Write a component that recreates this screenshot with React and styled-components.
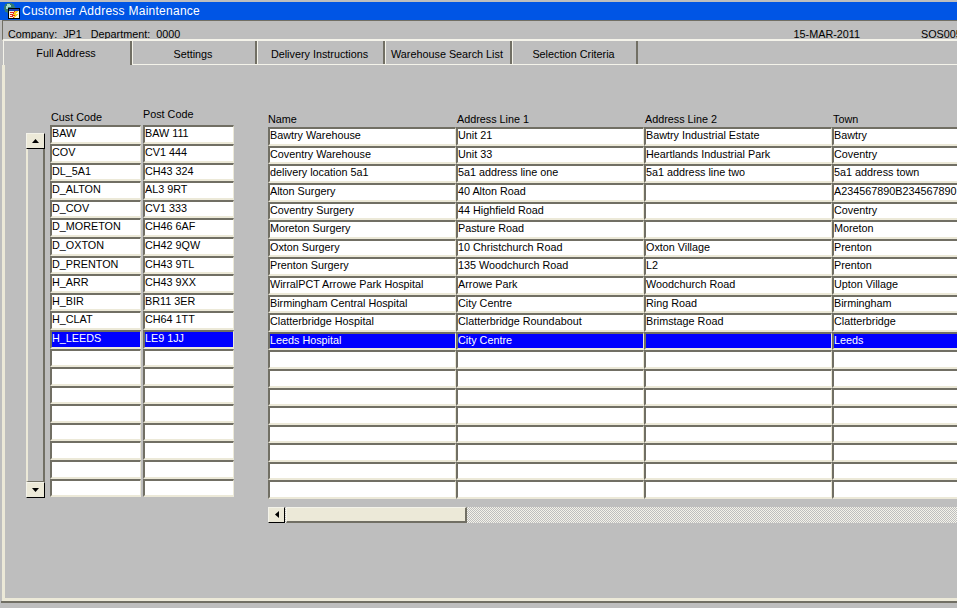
import styled, { createGlobalStyle } from "styled-components";

const GlobalStyle = createGlobalStyle`
  html, body {
    margin: 0;
    padding: 0;
    width: 957px;
    height: 608px;
    overflow: hidden;
    background: #bebebe;
    font-family: "Liberation Sans", Arial, sans-serif;
    font-size: 10.8px;
    color: #000;
  }
`;

const Screen = styled.div`
  width: 957px;
  height: 608px;
  padding-top: 2px;
  box-sizing: border-box;
  overflow: hidden;
  background: #bebebe;
  display: flex;
  flex-direction: column;
`;
const TitleBar = styled.div`
  height: 18px;
  flex: none;
  background: #0055e5;
  color: #fff;
  display: flex;
  align-items: center;
  gap: 2px;
  padding-left: 4px;
  font-size: 12px;
  letter-spacing: 0.26px;
  white-space: nowrap;
`;
const InfoBar = styled.div`
  height: 21px;
  flex: none;
  box-sizing: border-box;
  margin-left: 2px;
  border-top: 1px solid #716f64;
  border-left: 1px solid #716f64;
  border-bottom: 2px solid #f4f3ea;
  display: flex;
  align-items: flex-end;
  padding: 0 0 0 5px;
  white-space: nowrap;
  overflow: hidden;
  & > span {
    line-height: 10px;
  }
`;
const InfoDept = styled.span`
  margin-left: 9px;
`;
const InfoDate = styled.span`
  margin-left: auto;
`;
const InfoCode = styled.span`
  width: 36px;
  margin-left: 61px;
  overflow: hidden;
`;
const TabStrip = styled.div`
  height: 23px;
  flex: none;
  margin-left: 3px;
  display: flex;
  border-bottom: 1px solid #f4f3ea;
`;
const Tab = styled.div`
  width: ${(p) => p.$w}px;
  box-sizing: border-box;
  border-left: 1px solid #f4f3ea;
  border-right: 2px solid #716f64;
  display: flex;
  align-items: center;
  justify-content: center;
  padding: ${(p) => (p.$active ? 0 : 2)}px 2px 0 0;
  ${(p) => p.$active && "margin-bottom: -1px; background: #bebebe; position: relative;"}
  white-space: nowrap;
`;
const Panel = styled.div`
  height: 536px;
  flex: none;
  box-sizing: border-box;
  margin-left: 2px;
  border-left: 3px solid #ece9d8;
  border-bottom: 3px solid #ece9d8;
  padding: 44.4px 0 0 21px;
  display: flex;
  align-items: flex-start;
  overflow: hidden;
`;
const BottomLine = styled.div`
  height: 2px;
  flex: none;
  margin-left: 1px;
  background: #716f64;
`;
const VScroll = styled.div`
  width: 19px;
  height: 365px;
  flex: none;
  margin-top: 23.6px;
  margin-right: 5px;
  display: flex;
  flex-direction: column;
`;
const ScrollButton = styled.div`
  flex: none;
  box-sizing: border-box;
  background: #ece9d8;
  border: 1px solid;
  border-color: #f4f3ea #000 #000 #f4f3ea;
  display: flex;
  align-items: center;
  justify-content: center;
  width: ${(p) => p.$w}px;
  height: ${(p) => p.$h}px;
`;
const VTrack = styled.div`
  flex: 1;
  box-sizing: border-box;
  border-left: 2px solid #ece9d8;
  border-right: 2px solid #716f64;
  border-bottom: 1px solid #716f64;
`;
const Column = styled.div`
  width: ${(p) => p.$w}px;
  flex: none;
  margin-right: ${(p) => p.$gap || 0}px;
`;
const Label = styled.div`
  height: 16px;
  line-height: ${(p) => p.$lh || 16}px;
  white-space: nowrap;
  padding-left: ${(p) => (p.$flush ? 0 : 1)}px;
`;
const Stack = styled.div`
  display: grid;
  grid-auto-rows: 18.6px;
`;
const Field = styled.div`
  box-sizing: border-box;
  background: ${(p) => (p.$selected ? "#0000ff" : "#fff")};
  color: ${(p) => (p.$selected ? "#fff" : "#000")};
  border-style: solid;
  border-width: 2px 1px 2px 2px;
  border-color: #716f64 #ece9d8 #ece9d8 #716f64;
  line-height: 13px;
  padding-left: 0;
  white-space: nowrap;
  overflow: hidden;
`;
const RightSide = styled.div`
  flex: none;
  margin-top: 1.8px;
`;
const Columns = styled.div`
  display: flex;
`;
const HScroll = styled.div`
  margin-top: 7.8px;
  height: 16px;
  width: 689px;
  display: flex;
  background: repeating-conic-gradient(#bebebe 0 25%, #f4f3ea 0 50%) 0 0 / 2px 2px;
`;
const HThumb = styled.div`
  width: 181px;
  flex: none;
  margin-left: 1px;
  box-sizing: border-box;
  background: #ece9d8;
  border-top: 1px solid #f4f3ea;
  border-left: 1px solid #f4f3ea;
  border-right: 2px solid #716f64;
  border-bottom: 2px solid #716f64;
`;

const rows = [
  ["BAW", "BAW 111", "Bawtry Warehouse", "Unit 21", "Bawtry Industrial Estate", "Bawtry"],
  ["COV", "CV1 444", "Coventry Warehouse", "Unit 33", "Heartlands Industrial Park", "Coventry"],
  ["DL_5A1", "CH43 324", "delivery location 5a1", "5a1 address line one", "5a1 address line two", "5a1 address town"],
  ["D_ALTON", "AL3 9RT", "Alton Surgery", "40 Alton Road", "", "A234567890B234567890"],
  ["D_COV", "CV1 333", "Coventry Surgery", "44 Highfield Road", "", "Coventry"],
  ["D_MORETON", "CH46 6AF", "Moreton Surgery", "Pasture Road", "", "Moreton"],
  ["D_OXTON", "CH42 9QW", "Oxton Surgery", "10 Christchurch Road", "Oxton Village", "Prenton"],
  ["D_PRENTON", "CH43 9TL", "Prenton Surgery", "135 Woodchurch Road", "L2", "Prenton"],
  ["H_ARR", "CH43 9XX", "WirralPCT Arrowe Park Hospital", "Arrowe Park", "Woodchurch Road", "Upton Village"],
  ["H_BIR", "BR11 3ER", "Birmingham Central Hospital", "City Centre", "Ring Road", "Birmingham"],
  ["H_CLAT", "CH64 1TT", "Clatterbridge Hospital", "Clatterbridge Roundabout", "Brimstage Road", "Clatterbridge"],
  ["H_LEEDS", "LE9 1JJ", "Leeds Hospital", "City Centre", "", "Leeds"],
];
const SELECTED = 11;
const ROW_COUNT = 20;

const tabs = [
  ["Full Address", 129, true],
  ["Settings", 125],
  ["Delivery Instructions", 128],
  ["Warehouse Search List", 127],
  ["Selection Criteria", 126],
];

const rightColumns = [
  ["Name", 2, true],
  ["Address Line 1", 3],
  ["Address Line 2", 4],
  ["Town", 5],
];

function Cells({ index }) {
  return (
    <Stack>
      {Array.from({ length: ROW_COUNT }, (_, i) => (
        <Field key={i} $selected={i === SELECTED}>
          {rows[i] ? rows[i][index] : ""}
        </Field>
      ))}
    </Stack>
  );
}

const AppIcon = () => (
  <svg width="16" height="18" viewBox="0 0 16 18" shapeRendering="crispEdges">
    <path d="M3 1h5v1h2v2h1v3H9v4H3v-1H1V8H0V4h1V2h2z" fill="#2f7a78" />
    <path d="M3 2h3v1h1v2H4v2H2V4h1z" fill="#a8d8c8" />
    <path d="M4 6h12v11H4z" fill="#000" />
    <path d="M5 7h10v9H5z" fill="#fbf7e4" />
    <path d="M5 7h10v2H5z" fill="#1f3fb0" />
    <path d="M6 10h3v1H6zM6 12h3v1H6zM6 14h3v1H6z" fill="#e0281e" />
    <path d="M11 9h3l-2 3h2l-4 4 1-3H9z" fill="#ffd21f" />
    <path d="M10 9h1l-2 4h2l-1 3H9l1-2H8z" fill="#e0281e" />
  </svg>
);

const App = () => {
  return (
    <>
      <GlobalStyle />
      <Screen>
        <TitleBar>
          <AppIcon />
          Customer Address Maintenance
        </TitleBar>
        <InfoBar>
          <span>Company:&nbsp; JP1</span>
          <InfoDept>Department:&nbsp; 0000</InfoDept>
          <InfoDate>15-MAR-2011</InfoDate>
          <InfoCode>SOS005</InfoCode>
        </InfoBar>
        <TabStrip>
          {tabs.map(([label, w, active]) => (
            <Tab key={label} $w={w} $active={active}>
              {label}
            </Tab>
          ))}
        </TabStrip>
        <Panel>
          <VScroll>
            <ScrollButton $w={19} $h={16}>
              <svg width="7" height="4" viewBox="0 0 7 4">
                <path d="M3.5 0L7 4H0z" fill="#000" />
              </svg>
            </ScrollButton>
            <VTrack />
            <ScrollButton $w={19} $h={16}>
              <svg width="7" height="4" viewBox="0 0 7 4">
                <path d="M0 0h7L3.5 4z" fill="#000" />
              </svg>
            </ScrollButton>
          </VScroll>
          <Column $w={91} $gap={2}>
            <Label>Cust Code</Label>
            <Cells index={0} />
          </Column>
          <Column $w={91} $gap={34}>
            <Label $lh={10} $flush>Post Code</Label>
            <Cells index={1} />
          </Column>
          <RightSide>
            <Columns>
              {rightColumns.map(([title, index, flush]) => (
                <Column key={title} $w={188}>
                  <Label $flush={flush}>{title}</Label>
                  <Cells index={index} />
                </Column>
              ))}
            </Columns>
            <HScroll>
              <ScrollButton $w={17} $h={16}>
                <svg width="4" height="7" viewBox="0 0 4 7">
                  <path d="M4 0v7L0 3.5z" fill="#000" />
                </svg>
              </ScrollButton>
              <HThumb />
            </HScroll>
          </RightSide>
        </Panel>
        <BottomLine />
      </Screen>
    </>
  );
};

export default App;
